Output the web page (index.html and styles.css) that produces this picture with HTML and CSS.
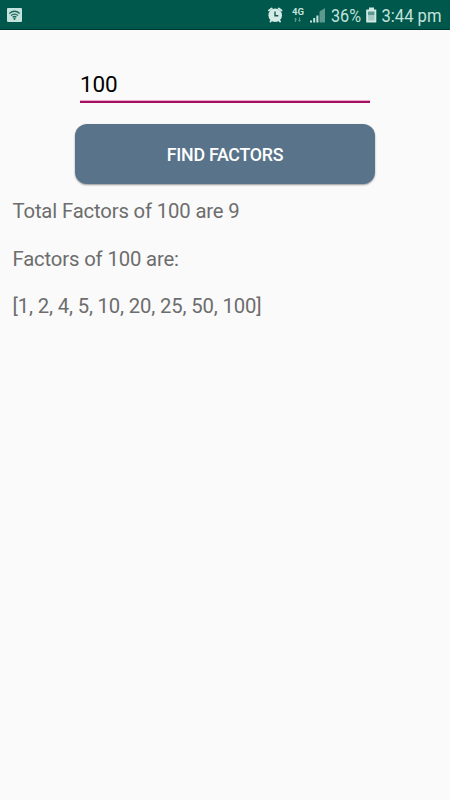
FILE: index.html
```html
<!DOCTYPE html>
<html lang="en">
<head>
    <meta charset="UTF-8">
    <meta name="viewport" content="width=device-width, initial-scale=1.0">
    <title>Find Factors</title>
    <link rel="stylesheet" href="styles.css">
</head>
<body>
    <header class="status-bar">
        <svg class="wifi" width="15" height="14" viewBox="0 0 15 14">
            <rect width="15" height="14" rx="1" fill="#c3e3dc"/>
            <g fill="none" stroke="#1d665a" stroke-width="1.3">
                <path d="M2.3 5.6Q7.5 1 12.7 5.6"/>
                <path d="M4 7.6Q7.5 4.6 11 7.6"/>
                <path d="M5.6 9.3Q7.5 7.7 9.4 9.3"/>
            </g>
            <circle cx="7.5" cy="10.8" r="1.1" fill="#1d665a"/>
        </svg>
        <!-- alarm, network, battery and clock -->
        <svg class="indicators" width="183" height="30" viewBox="267 0 183 30">
            <g stroke="#cfe9e4" stroke-width="2" stroke-linecap="round">
                <path d="M269 10.5l2.7-2M281.5 10.5l-2.7-2M270.5 21.5l1.5-2M280 21.5l-1.5-2"/>
            </g>
            <circle cx="275.2" cy="15.2" r="6.8" fill="#d4ebe6"/>
            <path d="M275 11.5v4.2h3.3" fill="none" stroke="#17594f" stroke-width="1.4"/>
            <text class="network" x="292" y="15.2" textLength="12" lengthAdjust="spacingAndGlyphs">4G</text>
            <path d="M295.5 17.5l1.6 2h-1v2.5h-1.2v-2.5h-1zM299.5 22l1.6-2h-1v-2.5h-1.2v2.5h-1z" fill="#58978b"/>
            <path d="M325 8v14.5h-5.5V11.5z" fill="#5c988d"/>
            <path d="M310 20.5h2v2h-2zM313.2 18h2v4.5h-2zM316.4 15.5h2v7h-2z" fill="#c3e2dc"/>
            <text class="status-text" x="331" y="22.3" textLength="30" lengthAdjust="spacingAndGlyphs">36%</text>
            <path d="M369 7.5h5v2h2.3v13H366.2v-13H369z" fill="#cfe9e4"/>
            <path d="M368 11.5h6.5v3.5H368z" fill="#5c988d"/>
            <path d="M368 15h6.5v5.5H368z" fill="#a3cbc3"/>
            <text class="status-text" x="381.5" y="22.3" textLength="60" lengthAdjust="spacingAndGlyphs">3:44 pm</text>
        </svg>
    </header>

    <main>
        <input class="number" type="text" inputmode="numeric" value="100" aria-label="Number">
        <button class="find" type="button">FIND FACTORS</button>
        <div class="result">
            <p>Total Factors of 100 are 9</p>
            <p>Factors of 100 are:</p>
            <p>[1, 2, 4, 5, 10, 20, 25, 50, 100]</p>
        </div>
    </main>
</body>
</html>
```
FILE: styles.css
```css
* { box-sizing: border-box; }
body { margin: 0; min-height: 100vh; background-color: #fafafa; font-family: Roboto, sans-serif; }
.status-bar { display: flex; justify-content: space-between; align-items: center; height: 30px; padding-left: 7px; background-color: #00574b; border-bottom: 1px solid #00382f; }
.status-bar svg { display: block; overflow: visible; }
.status-text { font-size: 19px; fill: #c3e2dc; }
.network { font-size: 9.5px; font-weight: 700; fill: #c3e2dc; }
main { display: flex; flex-direction: column; align-items: center; padding-top: 38px; }
.number { width: 290px; height: 35px; padding: 0 0 2px; border: none; border-bottom: 2px solid #a0105c; outline: none; background: linear-gradient(#f3a6cd, #f3a6cd) bottom / 100% 1px no-repeat; color: #000; font: 22.5px Roboto, sans-serif; letter-spacing: -0.15px; }
.find { width: 300px; height: 60px; margin-top: 21px; padding: 1px 0 0; border: none; border-radius: 12px; background-color: #59748a; box-shadow: 0 1px 2px rgba(0, 0, 0, 0.4); color: #fff; font: 500 17.8px Roboto, sans-serif; letter-spacing: -0.25px; }
.result { align-self: stretch; padding: 16px 12.5px; color: #6d6d6d; font-size: 20.3px; line-height: 23.8px; letter-spacing: -0.15px; }
.result p { margin: 0 0 23.8px; }
```
